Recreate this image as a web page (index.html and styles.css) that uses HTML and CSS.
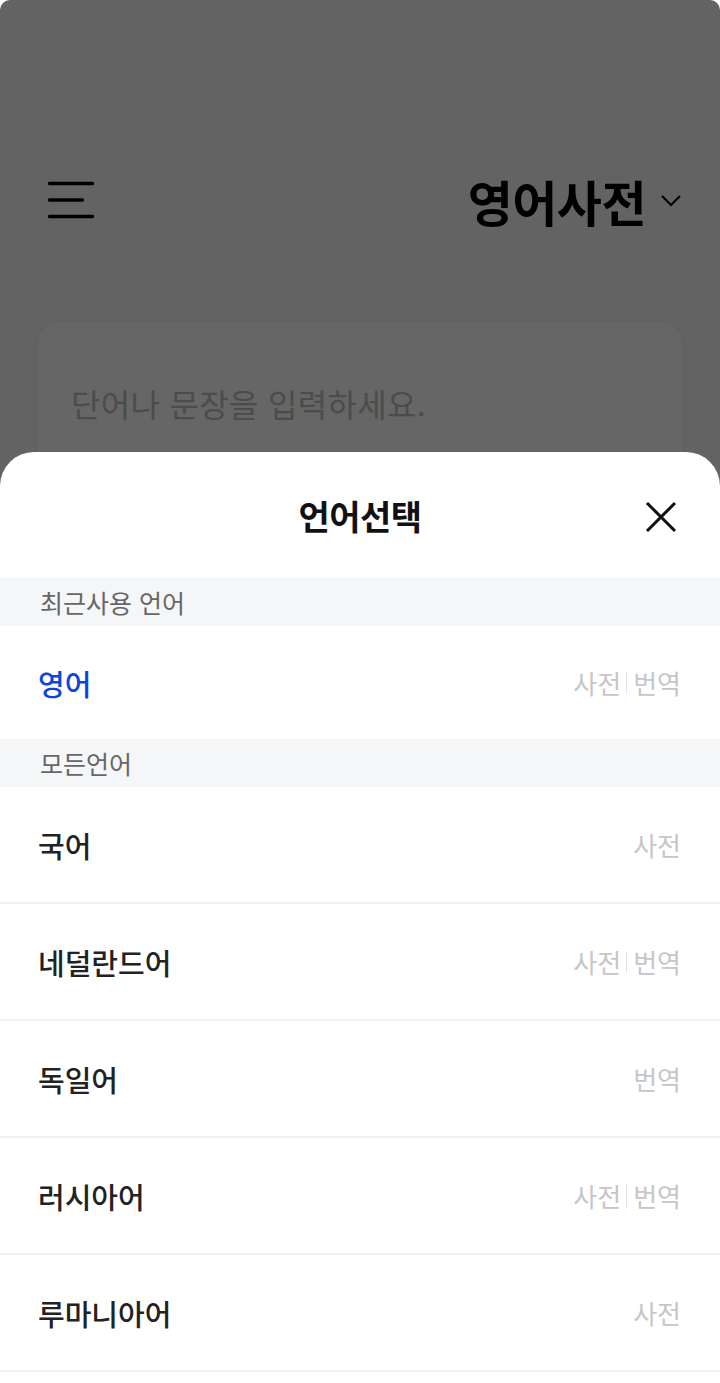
FILE: index.html
```html
<!DOCTYPE html>
<html lang="ko">
<head>
    <meta charset="UTF-8">
    <meta name="viewport" content="width=device-width, initial-scale=1.0">
    <title>영어사전</title>
    <link rel="stylesheet" href="styles.css">
</head>
<body>
    <div class="screen">
        <!-- Dictionary page behind the sheet -->
        <div class="page">
            <header class="topbar">
                <button class="menu-btn" aria-label="메뉴">
                    <svg width="46" height="38" viewBox="0 0 46 38">
                        <path d="M1.5 2.5H44.5M1.5 19H34.5M1.5 35.5H44.5" stroke="#000" stroke-width="3.4" stroke-linecap="round" fill="none"/>
                    </svg>
                </button>
                <div class="dict-title">
                    <span>영어사전</span>
                    <svg width="22" height="14" viewBox="0 0 22 14">
                        <path d="M2 2L11 11L20 2" stroke="#000" stroke-width="2.2" fill="none"/>
                    </svg>
                </div>
            </header>

            <div class="search-box">
                <span class="placeholder">단어나 문장을 입력하세요.</span>
            </div>
        </div>

        <div class="dim"></div>

        <!-- Language select bottom sheet -->
        <div class="sheet">
            <div class="sheet-head">
                <h2>언어선택</h2>
                <button class="close-btn" aria-label="닫기">
                    <svg width="32" height="32" viewBox="0 0 32 32">
                        <path d="M2 2L30 30M30 2L2 30" stroke="#111" stroke-width="3" fill="none"/>
                    </svg>
                </button>
            </div>

            <div class="section-label">최근사용 언어</div>
            <div class="lang-row recent">
                <span class="lang-name active">영어</span>
                <span class="lang-tags"><span>사전</span><i></i><span>번역</span></span>
            </div>

            <div class="section-label">모든언어</div>
            <ul class="lang-list">
                <li class="lang-row">
                    <span class="lang-name">국어</span>
                    <span class="lang-tags"><span>사전</span></span>
                </li>
                <li class="lang-row">
                    <span class="lang-name">네덜란드어</span>
                    <span class="lang-tags"><span>사전</span><i></i><span>번역</span></span>
                </li>
                <li class="lang-row">
                    <span class="lang-name">독일어</span>
                    <span class="lang-tags"><span>번역</span></span>
                </li>
                <li class="lang-row">
                    <span class="lang-name">러시아어</span>
                    <span class="lang-tags"><span>사전</span><i></i><span>번역</span></span>
                </li>
                <li class="lang-row">
                    <span class="lang-name">루마니아어</span>
                    <span class="lang-tags"><span>사전</span></span>
                </li>
            </ul>
        </div>
    </div>
</body>
</html>
```

FILE: styles.css
```css
* {
    box-sizing: border-box;
}
body {
    margin: 0;
    padding: 0;
    background-color: #fff;
    font-family: "Noto Sans CJK KR", "Noto Sans", sans-serif;
    color: #222;
}
button {
    background: none;
    border: none;
    padding: 0;
    cursor: pointer;
}
.screen {
    position: relative;
    height: 1383px;
    overflow: hidden;
    border-radius: 10px 10px 0 0;
    background-color: #f7f7f7;
}

/* page under the sheet */
.page {
    padding: 160px 38px 0;
}
.topbar {
    display: flex;
    align-items: center;
    justify-content: space-between;
    height: 80px;
    padding: 0 0 0 10px;
}
.menu-btn {
    display: flex;
}
.dict-title {
    display: flex;
    align-items: center;
    gap: 14px;
    font-size: 49px;
    font-weight: 700;
    letter-spacing: -0.5px;
    color: #000;
}
.dict-title svg {
    margin-top: 2px;
}
.search-box {
    margin-top: 82px;
    height: 300px;
    background-color: #fff;
    border-radius: 22px;
    padding: 58px 33px;
    box-shadow: 0 0 4px rgba(0, 0, 0, 0.05);
}
.placeholder {
    font-size: 32px;
    color: #bdbdbd;
    letter-spacing: 0.3px;
}

.dim {
    position: absolute;
    inset: 0;
    background-color: rgba(0, 0, 0, 0.6);
}

/* bottom sheet */
.sheet {
    position: absolute;
    top: 452px;
    left: 0;
    right: 0;
    bottom: 0;
    background-color: #fff;
    border-radius: 34px 34px 0 0;
}
.sheet-head {
    display: flex;
    align-items: center;
    justify-content: center;
    height: 126px;
    position: relative;
}
.sheet-head h2 {
    margin: 0;
    font-size: 34px;
    font-weight: 700;
    color: #111;
    letter-spacing: -0.5px;
}
.close-btn {
    position: absolute;
    right: 43px;
    top: 49px;
    display: flex;
}
.section-label {
    height: 48px;
    display: flex;
    align-items: center;
    padding: 0 40px;
    background-color: #f5f6f8;
    font-size: 25px;
    color: #666;
}
.lang-list {
    list-style: none;
    margin: 0;
    padding: 0;
}
.lang-row {
    display: flex;
    align-items: center;
    justify-content: space-between;
    height: 117px;
    padding: 0 39px 0 38px;
    border-bottom: 2px solid #f1f1f1;
}
.lang-row.recent {
    height: 113px;
    border-bottom: none;
}
.lang-name {
    font-size: 29px;
    font-weight: 500;
    color: #222;
    letter-spacing: 0;
}
.lang-name.active {
    color: #0c45d8;
}
.lang-tags {
    display: flex;
    align-items: center;
    font-size: 26px;
    color: #c6c6c6;
}
.lang-tags i {
    display: block;
    width: 1px;
    height: 22px;
    margin: 0 6px 0 5px;
    background-color: #e3e3e3;
}
```
